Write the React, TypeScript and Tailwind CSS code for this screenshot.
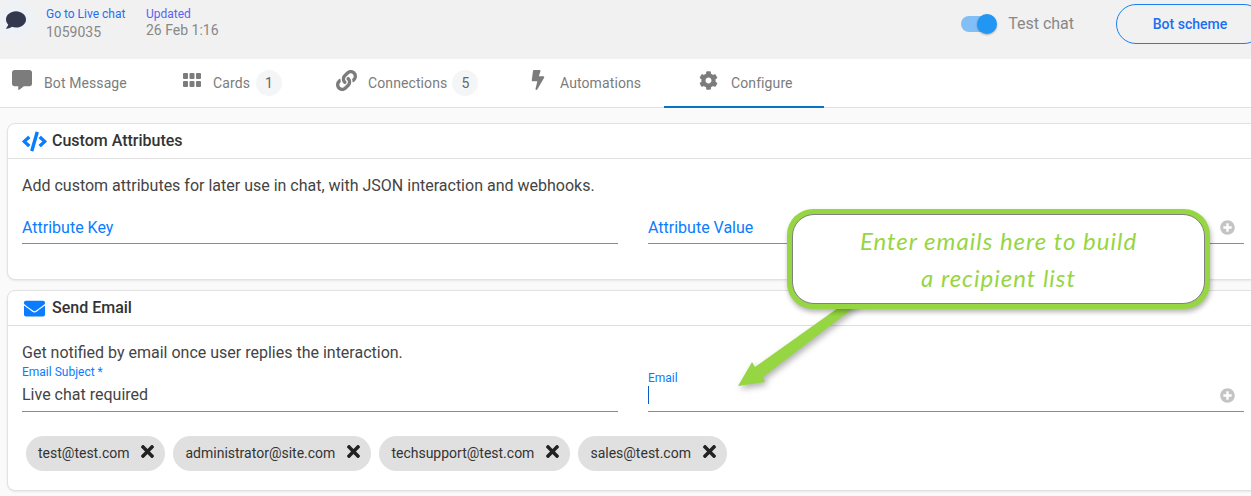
import type { ReactNode } from "react";
import { FaBolt, FaCode, FaCog, FaComment, FaCommentAlt, FaEnvelope, FaLink, FaPlusCircle, FaTimes } from "react-icons/fa";

function GridIcon() {
  return (
    <svg width="18" height="14" viewBox="0 0 18 14" fill="currentColor">
      <rect x="0" y="0" width="5" height="6" rx="1" />
      <rect x="6.5" y="0" width="5" height="6" rx="1" />
      <rect x="13" y="0" width="5" height="6" rx="1" />
      <rect x="0" y="8" width="5" height="6" rx="1" />
      <rect x="6.5" y="8" width="5" height="6" rx="1" />
      <rect x="13" y="8" width="5" height="6" rx="1" />
    </svg>
  );
}

const tabs = [
  { label: "Bot Message", icon: <FaCommentAlt size={20} />, width: "w-[148px] pl-3", gap: "gap-3" },
  { label: "Cards", icon: <GridIcon />, width: "w-[153px] pl-[35px]", gap: "gap-3", count: 1 },
  { label: "Connections", icon: <FaLink size={21} />, width: "w-[194px] pl-[35px]", gap: "gap-[11px]", count: 5 },
  { label: "Automations", icon: <FaBolt size={20} />, width: "w-[169px] pl-[33px]", gap: "gap-3" },
  { label: "Configure", icon: <FaCog size={19} />, width: "w-[160px] pl-[35px]", gap: "gap-[13px]", active: true },
];

const emails = ["test@test.com", "administrator@site.com", "techsupport@test.com", "sales@test.com"];

function Card({ icon, title, className, children }: { icon: ReactNode; title: string; className: string; children: ReactNode }) {
  return (
    <section className={`w-[1270px] ml-[7px] bg-white border border-[#e2e2e2] rounded-lg shadow-[0_1px_2px_rgba(0,0,0,0.08)] ${className}`}>
      <div className="h-[35px] flex items-center border-b border-[#e0e0e0] pl-[14px]">
        <span className="w-[30px] flex items-center text-[#0a7cff]">{icon}</span>
        <h2 className="text-base font-medium text-[#333]">{title}</h2>
      </div>
      {children}
    </section>
  );
}

function Field({ label, small, value, cursor, plus, labelTop }: { label: string; small?: boolean; value?: string; cursor?: boolean; plus?: boolean; labelTop?: string }) {
  return (
    <div className="relative h-full border-b border-[#8c8c8c]">
      {small ? (
        <label className={`block text-xs text-[#0a7cff] ${labelTop}`}>{label}</label>
      ) : (
        <label className="block pt-1 text-base leading-[24px] text-[#0a7cff]">{label}</label>
      )}
      {value && <p className="text-base leading-[24px] text-[#444] mt-[3px]">{value}</p>}
      {cursor && <div className="w-px h-[18px] bg-[#0a5cc4]" />}
      {plus && <FaPlusCircle size={15} className="absolute right-[9px] bottom-[8px] text-[#c4c4c4]" />}
    </div>
  );
}

export default function App() {
  return (
    <div className="relative w-[1251px] h-[496px] overflow-hidden bg-[#fafafa] font-[Roboto,sans-serif]">
      <header className="h-[59px] bg-[#f1f1f1] flex items-start">
        <div className="w-[40px] h-[40px] -ml-[5px] rounded-full bg-[#eef2f6] flex items-center justify-center pl-[2px]">
          <FaComment size={20} className="text-[#33384f]" />
        </div>
        <div className="ml-[11px] w-[100px] pt-[7px]">
          <p className="text-xs leading-[14px] text-[#1f6fef]">Go to Live chat</p>
          <p className="text-sm leading-[16px] mt-[3px] text-[#888]">1059035</p>
        </div>
        <div className="pt-[7px]">
          <p className="text-xs leading-[14px] text-[#5c62f0]">Updated</p>
          <p className="text-sm leading-[16px] mt-[1px] text-[#888]">26 Feb 1:16</p>
        </div>
        <div className="ml-auto flex items-center pt-[4px] -mr-[13px]">
          <div className="relative w-[36px] h-[20px] flex items-center">
            <div className="w-[29px] h-[16px] rounded-full bg-[#82bff6]" />
            <div className="absolute right-0 top-0 w-[20px] h-[20px] rounded-full bg-[#2196f3] shadow-[0_1px_2px_rgba(0,0,0,0.3)]" />
          </div>
          <span className="ml-[11px] text-base text-[#888]">Test chat</span>
          <button className="ml-[42px] w-[148px] h-[40px] rounded-full border border-[#1a7ef2] text-sm font-medium text-[#1a6ff2]">Bot scheme</button>
        </div>
      </header>

      <nav className="h-[49px] bg-white border-b border-[#e0e0e0] flex">
        {tabs.map((tab) => (
          <div key={tab.label} className={`relative h-[48px] flex items-center text-[#7c7c7c] ${tab.width} ${tab.gap}`}>
            <span className="-mt-[6px]">{tab.icon}</span>
            <span className="text-sm tracking-[0.1px]">{tab.label}</span>
            {tab.count && (
              <span className="-ml-[6px] w-[26px] h-[26px] rounded-full bg-[#f3f5f7] flex items-center justify-center text-sm text-[#666]">{tab.count}</span>
            )}
            {tab.active && <div className="absolute left-0 right-0 -bottom-px h-[2px] bg-[#0a74c4]" />}
          </div>
        ))}
      </nav>

      <Card icon={<FaCode size={25} />} title="Custom Attributes" className="mt-[15px] h-[157px]">
        <p className="pl-[14px] pt-[16px] text-base leading-[22px] text-[#444]">Add custom attributes for later use in chat, with JSON interaction and webhooks.</p>
        <div className="ml-[14px] grid grid-cols-[596px_596px] gap-[30px] h-[32px] mt-[15px]">
          <Field label="Attribute Key" />
          <Field label="Attribute Value" plus />
        </div>
      </Card>

      <Card icon={<FaEnvelope size={21} className="ml-[2px]" />} title="Send Email" className="mt-[10px] h-[201px]">
        <p className="pl-[14px] pt-[16px] text-base leading-[22px] text-[#444]">Get notified by email once user replies the interaction.</p>
        <div className="ml-[14px] grid grid-cols-[596px_596px] gap-[30px] h-[48px]">
          <Field label="Email Subject *" small value="Live chat required" />
          <Field label="Email" small cursor plus labelTop="pt-[6px]" />
        </div>
        <div className="ml-[18px] mt-[24px] flex gap-2">
          {emails.map((email) => (
            <div key={email} className="h-[35px] rounded-full bg-[#e0e0e0] flex items-center pl-3 pr-[11px] gap-3 text-sm text-[#333]">
              <span className="pb-px">{email}</span>
              <FaTimes size={19} className="w-[13px] text-[#222] -mt-[4px]" />
            </div>
          ))}
        </div>
      </Card>

      <svg className="absolute left-[730px] top-[300px] drop-shadow-[2px_3px_3px_rgba(0,0,0,0.3)]" width="135" height="95" viewBox="730 300 135 95">
        <polygon points="845,303 860,303 763,377 765,382 738,386 752,362 755,367" fill="#97d643" />
      </svg>
      <div className="absolute left-[787px] top-[209px] w-[423px] h-[100px] rounded-[26px] bg-[#97d643] p-[5px] shadow-[1px_3px_5px_rgba(0,0,0,0.3)]">
        <div className="h-full rounded-[22px] bg-white border border-[#808080] flex flex-col items-center pt-[7px] font-[Lato,sans-serif] italic text-[24px] tracking-[1px] leading-[37px] text-[#97d643]">
          <p>Enter emails here to build</p>
          <p>a recipient list</p>
        </div>
      </div>
    </div>
  );
}
